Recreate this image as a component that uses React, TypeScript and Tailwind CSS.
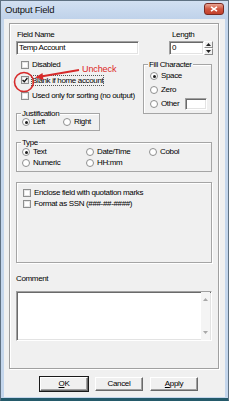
import React from "react";

function CheckBox({ checked }: { checked?: boolean }) {
  return (
    <span className="w-[8px] h-[8px] shrink-0 border border-[#8e8f8f] bg-white shadow-[inset_0_0_0_1px_#e6e6e6] flex items-center justify-center">
      {checked && (
        <svg width="6" height="6" viewBox="0 0 6 6">
          <path d="M0.6 3 L2.3 4.7 L5.4 1" stroke="#151515" strokeWidth="1.3" fill="none" />
        </svg>
      )}
    </span>
  );
}

function Radio({ checked }: { checked?: boolean }) {
  return (
    <span className="w-[8px] h-[8px] shrink-0 rounded-full border border-[#8e8f8f] bg-white flex items-center justify-center">
      {checked && <span className="w-[3px] h-[3px] rounded-full bg-[#1e1e1e]" />}
    </span>
  );
}

function Sunken({ className, children }: { className?: string; children?: React.ReactNode }) {
  return (
    <div
      className={
        "bg-white border border-t-[#a0a0a0] border-l-[#a0a0a0] border-b-[#ffffff] border-r-[#ffffff] shadow-[inset_1px_1px_0_#6a6a6a,inset_-1px_-1px_0_#e3e3e3] " +
        (className ?? "")
      }
    >
      {children}
    </div>
  );
}

function Btn({ children, def }: { children: React.ReactNode; def?: boolean }) {
  return (
    <div
      className={
        "w-[50px] h-[16px] flex items-center justify-center bg-[#f0f0f0] " +
        (def ? "border border-[#1a1a1a]" : "border border-transparent")
      }
    >
      <div className="w-full h-full flex items-center justify-center border border-t-white border-l-white border-b-[#696969] border-r-[#696969] shadow-[inset_-1px_-1px_0_#a0a0a0]">
        {children}
      </div>
    </div>
  );
}

export default function App() {
  return (
    <div className="relative w-[229px] h-[401px] bg-[#c4d6ec] border border-[#5f7182] border-b-[#245a6a] flex flex-col font-['Liberation_Sans',Arial,sans-serif] text-[8px] tracking-[-0.35px] text-black overflow-hidden select-none">
      {/* Title bar */}
      <div className="h-[18px] flex items-start justify-between pl-[4px] pr-[4px] bg-gradient-to-b from-[#d2e0f1] to-[#bfd2ea]">
        <span className="mt-[3px] text-[9.5px] leading-[11px] tracking-[-0.2px] text-[#111]">Output Field</span>
        <div className="mt-[2px] w-[20px] h-[12px] rounded-[3px] border border-[#7a2a22] bg-gradient-to-b from-[#e8a493] via-[#d0553f] to-[#c2402b] flex items-center justify-center">
          <svg width="8" height="6" viewBox="0 0 8 6">
            <path d="M1 0.8 L7 5.2 M7 0.8 L1 5.2" stroke="#ffffff" strokeWidth="1.6" />
          </svg>
        </div>
      </div>

      {/* Client */}
      <div className="mx-[3px] h-[378px] bg-[#f0f0f0] flex flex-col">
        {/* Panel */}
        <div className="mt-[4px] ml-[5px] mr-[6px] h-[346px] border border-[#a0a0a0] shadow-[inset_1px_1px_0_#ffffff,1px_1px_0_#ffffff] px-[6px] flex flex-col">
          {/* Row 1 */}
          <div className="pt-[6px] flex justify-between">
            <div className="w-[123px] flex flex-col">
              <span className="h-[10px] leading-[10px] pl-[1px]">Field Name</span>
              <Sunken className="mt-[1px] h-[14px] flex items-center pl-[2px] leading-[10px]">Temp Account</Sunken>
            </div>
            <div className="w-[44px] flex flex-col mr-[-1px]">
              <span className="h-[10px] leading-[10px] pl-[3px]">Length</span>
              <div className="mt-[1px] h-[14px] flex">
                <Sunken className="w-[35px] h-[14px] flex items-center pl-[2px] leading-[10px]">0</Sunken>
                <div className="w-[9px] h-[14px] flex flex-col">
                  <div className="h-[7px] bg-[#f0f0f0] border border-t-white border-l-white border-b-[#8a8a8a] border-r-[#8a8a8a] flex items-center justify-center">
                    <svg width="5" height="3" viewBox="0 0 5 3"><path d="M0 3 L2.5 0 L5 3 Z" fill="#222" /></svg>
                  </div>
                  <div className="h-[7px] bg-[#f0f0f0] border border-t-white border-l-white border-b-[#8a8a8a] border-r-[#8a8a8a] flex items-center justify-center">
                    <svg width="5" height="3" viewBox="0 0 5 3"><path d="M0 0 L2.5 3 L5 0 Z" fill="#222" /></svg>
                  </div>
                </div>
              </div>
            </div>
          </div>

          {/* Row 2 */}
          <div className="mt-[2px] flex">
            <div className="flex-1 flex flex-col">
              <div className="h-[15.5px] flex items-center pl-[5px] gap-[3px]">
                <CheckBox />
                <span>Disabled</span>
              </div>
              <div className="h-[15.5px] flex items-center pl-[5px] gap-[3px]">
                <CheckBox checked />
                <span className="outline outline-1 outline-dotted outline-[#555] leading-[9px]">Blank if home account</span>
              </div>
              <div className="h-[15.5px] flex items-center pl-[5px] gap-[3px]">
                <CheckBox />
                <span>Used only for sorting (no output)</span>
              </div>
              <fieldset className="mt-[5px] w-[84px] border border-[#a5a5a5] shadow-[inset_1px_1px_0_#ffffff] pb-[3px]">
                <legend className="ml-[4px] px-[1px] leading-[9px] bg-[#f0f0f0]">Justification</legend>
                <div className="h-[9px] flex items-center pl-[5px]">
                  <div className="w-[41px] flex items-center gap-[3px]">
                    <Radio checked />
                    <span>Left</span>
                  </div>
                  <div className="flex items-center gap-[3px]">
                    <Radio />
                    <span>Right</span>
                  </div>
                </div>
              </fieldset>
            </div>
            <div className="w-[69px] flex flex-col">
              <fieldset className="mt-[3px] border border-[#a5a5a5] shadow-[inset_1px_1px_0_#ffffff] pb-[2px]">
                <legend className="ml-[4px] px-[1px] leading-[9px] bg-[#f0f0f0]">Fill Character</legend>
                <div className="h-[14px] flex items-center pl-[6px] gap-[3px]">
                  <Radio checked />
                  <span>Space</span>
                </div>
                <div className="h-[14px] flex items-center pl-[6px] gap-[3px]">
                  <Radio />
                  <span>Zero</span>
                </div>
                <div className="h-[14px] flex items-center pl-[6px] gap-[3px] pr-[4px]">
                  <Radio />
                  <span>Other</span>
                  <Sunken className="ml-auto w-[22px] h-[12px]" />
                </div>
              </fieldset>
            </div>
          </div>

          {/* Type */}
          <fieldset className="mt-[7px] border border-[#a5a5a5] shadow-[inset_1px_1px_0_#ffffff] pb-[2px]">
            <legend className="ml-[4px] px-[1px] leading-[9px] bg-[#f0f0f0]">Type</legend>
            <div className="grid grid-cols-[64px_63px_1fr] pl-[5px]">
              <div className="h-[11px] flex items-center gap-[3px]"><Radio checked /><span>Text</span></div>
              <div className="h-[11px] flex items-center gap-[3px]"><Radio /><span>Date/Time</span></div>
              <div className="h-[11px] flex items-center gap-[3px]"><Radio /><span>Cobol</span></div>
              <div className="h-[11px] flex items-center gap-[3px]"><Radio /><span>Numeric</span></div>
              <div className="h-[11px] flex items-center gap-[3px]"><Radio /><span>HH:mm</span></div>
            </div>
          </fieldset>

          {/* Options */}
          <div className="mt-[10px] h-[81px] border border-[#a5a5a5] shadow-[inset_1px_1px_0_#ffffff,1px_1px_0_#ffffff] pt-[5px] pl-[6px] flex flex-col">
            <div className="h-[11px] flex items-center gap-[3px]"><CheckBox /><span>Enclose field with quotation marks</span></div>
            <div className="h-[11px] flex items-center gap-[3px]"><CheckBox /><span>Format as SSN (###-##-####)</span></div>
          </div>

          {/* Comment */}
          <span className="mt-[11px] h-[10px] leading-[10px]">Comment</span>
          <Sunken className="mt-[7px] h-[50px] flex justify-end">
            <div className="w-[9px] h-full bg-[#f4f4f4] flex flex-col justify-between items-center py-[6px] mr-[1px]">
              <svg width="5" height="3" viewBox="0 0 5 3"><path d="M0 3 L2.5 0 L5 3 Z" fill="#a8a8a8" /></svg>
              <svg width="5" height="3" viewBox="0 0 5 3"><path d="M0 0 L2.5 3 L5 0 Z" fill="#a8a8a8" /></svg>
            </div>
          </Sunken>
        </div>

        {/* Buttons */}
        <div className="mt-[7px] h-[16px] flex gap-[5px] pl-[35px]">
          <Btn def>
            <span><span className="underline">O</span>K</span>
          </Btn>
          <Btn>
            <span>Cancel</span>
          </Btn>
          <Btn>
            <span><span className="underline">A</span>pply</span>
          </Btn>
        </div>
      </div>
      <div className="h-[1px] bg-[#c4d6ec]" />
      <div className="flex-1 bg-[#245a6a]" />

      {/* Annotation overlay */}
      <svg className="absolute left-0 top-0 pointer-events-none" width="229" height="401" viewBox="0 0 229 401">
        <circle cx="23" cy="81" r="9.5" fill="none" stroke="#d62a2a" strokeWidth="1.6" />
        <line x1="78" y1="69" x2="40" y2="75.5" stroke="#d62a2a" strokeWidth="1.8" />
        <path d="M34 76.6 L41.5 72 L42.5 79 Z" fill="#d62a2a" />
      </svg>
      <span className="absolute left-[81px] top-[63px] text-[9px] leading-[10px] tracking-[-0.1px] text-[#dc2424]">Uncheck</span>
    </div>
  );
}
